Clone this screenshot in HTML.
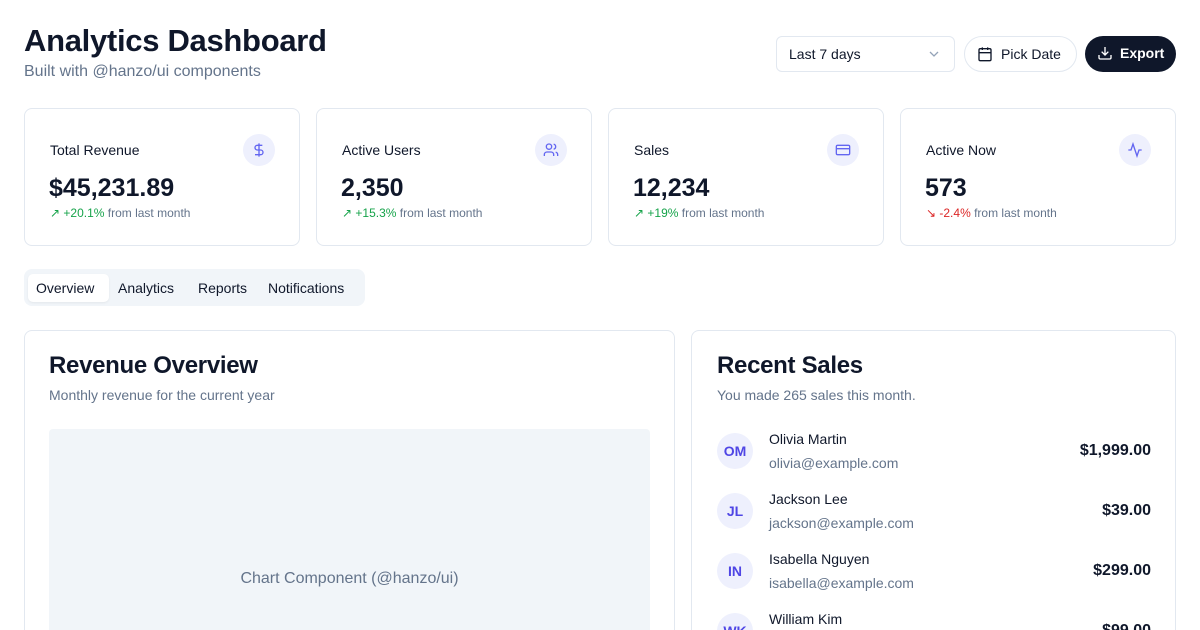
<!DOCTYPE html>
<html><head><meta charset="utf-8"><style>
*{box-sizing:border-box;margin:0;padding:0}
html,body{width:1200px;height:630px;overflow:hidden}
body{background:#fff;font-family:"Liberation Sans",Arial,sans-serif;color:#0f172a}
#wrap{position:relative;width:1200px;height:630px;overflow:hidden}
.a{position:absolute;white-space:nowrap}
.card{position:absolute;border:1px solid #e2e8f0;border-radius:8px;background:#fff;overflow:hidden}
.ic{position:absolute;width:32px;height:32px;border-radius:50%;background:#eef0fd;display:flex;align-items:center;justify-content:center}
.lbl{font-size:14px;font-weight:500}
.val{font-size:25px;font-weight:700}
.ch{font-size:12px;color:#64748b}
.g{color:#16a34a}.r{color:#dc2626}
.av{position:absolute;width:36px;height:36px;border-radius:50%;background:#eef0fd;color:#4f46e5;font-size:14px;font-weight:600;display:flex;align-items:center;justify-content:center}
.nm{font-size:14px;font-weight:500}
.em{font-size:14px;color:#64748b}
.amt{font-size:16px;font-weight:600;text-align:right}
</style></head><body><div id="wrap">
<div class="a" style="left:24px;top:23px;font-size:31px;font-weight:700;letter-spacing:-0.3px">Analytics Dashboard</div>
<div class="a" style="left:24px;top:63px;font-size:16px;color:#64748b">Built with @hanzo/ui components</div>

<div class="a" style="left:776px;top:36px;width:179px;height:36px;border:1px solid #e2e8f0;border-radius:6px;font-size:14px;padding:9px 12px">Last 7 days
<svg style="position:absolute;right:14px;top:13px" width="12" height="8" viewBox="0 0 12 8"><path d="M2 2l4 4 4-4" fill="none" stroke="#94a3b8" stroke-width="1.3"/></svg></div>
<div class="a" style="left:964px;top:36px;width:113px;height:36px;border:1px solid #e2e8f0;border-radius:18px;font-size:14px;font-weight:500;padding:9px 0 0 36px">Pick Date
<svg style="position:absolute;left:12px;top:9px" width="16" height="16" viewBox="0 0 24 24" fill="none" stroke="#0f172a" stroke-width="2"><rect x="3" y="4" width="18" height="18" rx="2"/><path d="M16 2v4M8 2v4M3 10h18"/></svg></div>
<div class="a" style="left:1085px;top:36px;width:91px;height:36px;background:#0f172a;color:#fff;border-radius:18px;font-size:14px;font-weight:600;padding:9px 0 0 35px">Export
<svg style="position:absolute;left:12px;top:9px" width="16" height="16" viewBox="0 0 24 24" fill="none" stroke="#fff" stroke-width="2"><path d="M21 15v4a2 2 0 0 1-2 2H5a2 2 0 0 1-2-2v-4M7 10l5 5 5-5M12 15V3"/></svg></div>

<div class="card" style="left:24px;top:108px;width:276px;height:138px">
 <div class="a lbl" style="left:25px;top:33px">Total Revenue</div>
 <div class="ic" style="left:218px;top:25px"><svg width="16" height="16" viewBox="0 0 24 24" fill="none" stroke="#6366f1" stroke-width="2"><path d="M12 2v20M17 5H9.5a3.5 3.5 0 0 0 0 7h5a3.5 3.5 0 0 1 0 7H6"/></svg></div>
 <div class="a val" style="left:24px;top:65px">$45,231.89</div>
 <div class="a ch" style="left:25px;top:97px"><span class="g">↗ +20.1%</span> from last month</div>
</div>
<div class="card" style="left:316px;top:108px;width:276px;height:138px">
 <div class="a lbl" style="left:25px;top:33px">Active Users</div>
 <div class="ic" style="left:218px;top:25px"><svg width="16" height="16" viewBox="0 0 24 24" fill="none" stroke="#6366f1" stroke-width="2"><path d="M16 21v-2a4 4 0 0 0-4-4H6a4 4 0 0 0-4 4v2"/><circle cx="9" cy="7" r="4"/><path d="M22 21v-2a4 4 0 0 0-3-3.87M16 3.13a4 4 0 0 1 0 7.75"/></svg></div>
 <div class="a val" style="left:24px;top:65px">2,350</div>
 <div class="a ch" style="left:25px;top:97px"><span class="g">↗ +15.3%</span> from last month</div>
</div>
<div class="card" style="left:608px;top:108px;width:276px;height:138px">
 <div class="a lbl" style="left:25px;top:33px">Sales</div>
 <div class="ic" style="left:218px;top:25px"><svg width="16" height="16" viewBox="0 0 24 24" fill="none" stroke="#6366f1" stroke-width="2"><rect x="2" y="5" width="20" height="14" rx="2"/><path d="M2 10h20"/></svg></div>
 <div class="a val" style="left:24px;top:65px">12,234</div>
 <div class="a ch" style="left:25px;top:97px"><span class="g">↗ +19%</span> from last month</div>
</div>
<div class="card" style="left:900px;top:108px;width:276px;height:138px">
 <div class="a lbl" style="left:25px;top:33px">Active Now</div>
 <div class="ic" style="left:218px;top:25px"><svg width="16" height="16" viewBox="0 0 24 24" fill="none" stroke="#6366f1" stroke-width="2"><path d="M22 12h-4l-3 9L9 3l-3 9H2"/></svg></div>
 <div class="a val" style="left:24px;top:65px">573</div>
 <div class="a ch" style="left:25px;top:97px"><span class="r">↘ -2.4%</span> from last month</div>
</div>

<div class="a" style="left:24px;top:269px;width:341px;height:37px;background:#f1f5f9;border-radius:8px"></div>
<div class="a" style="left:28px;top:274px;width:81px;height:28px;background:#fff;border-radius:5px;box-shadow:0 1px 2px rgba(0,0,0,.06)"></div>
<div class="a" style="left:36px;top:280px;font-size:14px;font-weight:500">Overview</div>
<div class="a" style="left:118px;top:280px;font-size:14px;font-weight:500">Analytics</div>
<div class="a" style="left:198px;top:280px;font-size:14px;font-weight:500">Reports</div>
<div class="a" style="left:268px;top:280px;font-size:14px;font-weight:500">Notifications</div>

<div class="card" style="left:24px;top:330px;width:651px;height:300px;border-bottom:none;border-radius:8px 8px 0 0">
 <div class="a" style="left:24px;top:21px;font-size:24px;font-weight:600;letter-spacing:-0.3px">Revenue Overview</div>
 <div class="a" style="left:24px;top:56px;font-size:14px;color:#64748b">Monthly revenue for the current year</div>
 <div class="a" style="left:24px;top:98px;width:601px;height:210px;background:#f1f5f9;border-radius:4px 4px 0 0"></div>
 <div class="a" style="left:24px;top:239px;width:601px;text-align:center;font-size:16px;color:#64748b">Chart Component (@hanzo/ui)</div>
</div>

<div class="card" style="left:691px;top:330px;width:485px;height:300px;border-bottom:none;border-radius:8px 8px 0 0">
 <div class="a" style="left:25px;top:21px;font-size:24px;font-weight:600;letter-spacing:-0.3px">Recent Sales</div>
 <div class="a" style="left:25px;top:56px;font-size:14px;color:#64748b">You made 265 sales this month.</div>

 <div class="av" style="left:25px;top:102px">OM</div>
 <div class="a nm" style="left:77px;top:100px">Olivia Martin</div>
 <div class="a em" style="left:77px;top:124px">olivia@example.com</div>
 <div class="a amt" style="right:24px;top:111px">$1,999.00</div>

 <div class="av" style="left:25px;top:162px">JL</div>
 <div class="a nm" style="left:77px;top:160px">Jackson Lee</div>
 <div class="a em" style="left:77px;top:184px">jackson@example.com</div>
 <div class="a amt" style="right:24px;top:171px">$39.00</div>

 <div class="av" style="left:25px;top:222px">IN</div>
 <div class="a nm" style="left:77px;top:220px">Isabella Nguyen</div>
 <div class="a em" style="left:77px;top:244px">isabella@example.com</div>
 <div class="a amt" style="right:24px;top:231px">$299.00</div>

 <div class="av" style="left:25px;top:282px">WK</div>
 <div class="a nm" style="left:77px;top:280px">William Kim</div>
 <div class="a amt" style="right:24px;top:291px">$99.00</div>
</div>
</div></body></html>
